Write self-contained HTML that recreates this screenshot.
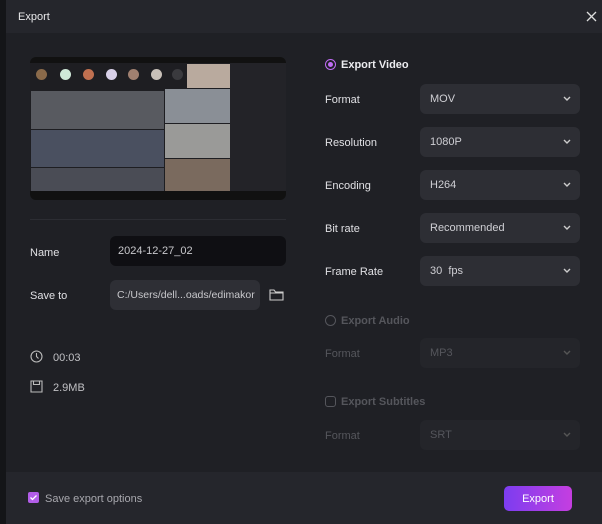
<!DOCTYPE html>
<html><head><meta charset="utf-8"><style>
*{margin:0;padding:0;box-sizing:border-box}
body{width:602px;height:524px;background:#1c1d22;font-family:"Liberation Sans",sans-serif;position:relative;overflow:hidden;color:#e4e4e8;font-size:11px}
.a{position:absolute}
.lbl{position:absolute;font-size:11px;color:#e0e0e4}
.dd{position:absolute;left:420px;width:160px;height:30px;border-radius:6px;background:#2d2e34;color:#cfcfd4;padding-left:10px;line-height:31px;font-size:11px}
.dd svg{position:absolute;right:9px;top:12px}
.dis{background:#24252a;color:#55565c}
.lbl.d{color:#55565c}
.av{position:absolute;top:12px;width:11px;height:11px;border-radius:50%}
</style></head><body>
<div class="a" style="left:0;top:0;width:6px;height:524px;background:#141518"></div>
<div class="a" style="left:6px;top:0;width:596px;height:33px;background:#25262c"></div>
<div class="a" style="left:6px;top:33px;width:596px;height:439px;background:#1f2025"></div>
<div class="a" style="left:6px;top:472px;width:596px;height:52px;background:#25262c"></div>
<div class="a" style="left:18px;top:11px;font-size:11px;color:#e8e8ea">Export</div>
<svg class="a" style="left:586px;top:11px" width="11" height="11"><path d="M1 1L10 10M10 1L1 10" stroke="#ddd" stroke-width="1.3"/></svg>

<div class="a" style="left:30px;top:57px;width:256px;height:143px;background:#111;border-radius:6px;overflow:hidden">
 <div class="a" style="left:0;top:6px;width:256px;height:128px;background:#1e1e22"></div>
 <div class="av" style="left:6px;background:#8a6a4a"></div>
 <div class="av" style="left:30px;background:#cfe8d8"></div>
 <div class="av" style="left:53px;background:#c07050"></div>
 <div class="av" style="left:76px;background:#d8d0e8"></div>
 <div class="av" style="left:98px;background:#a08070"></div>
 <div class="av" style="left:121px;background:#c8c0b8"></div>
 <div class="av" style="left:142px;background:#3a3a3e"></div>
 <div class="a" style="left:1px;top:34px;width:133px;height:38px;background:#585a60"></div>
 <div class="a" style="left:1px;top:73px;width:133px;height:37px;background:#4a5060"></div>
 <div class="a" style="left:1px;top:111px;width:133px;height:23px;background:#4a4c55"></div>
 <div class="a" style="left:135px;top:32px;width:65px;height:34px;background:#8a8f96"></div>
 <div class="a" style="left:135px;top:67px;width:65px;height:34px;background:#9a9a98"></div>
 <div class="a" style="left:135px;top:102px;width:65px;height:32px;background:#7a6a5e"></div>
 <div class="a" style="left:157px;top:7px;width:43px;height:24px;background:#b9aa9e"></div>
 <div class="a" style="left:200px;top:6px;width:56px;height:128px;background:#232328"></div>
</div>
<div class="a" style="left:30px;top:219px;width:256px;height:1px;background:#2c2d33"></div>

<div class="lbl" style="left:30px;top:247px">Name</div>
<div class="a" style="left:110px;top:236px;width:176px;height:30px;border-radius:6px;background:#0f0f13;color:#c8c8cc;padding-left:8px;line-height:31px">2024-12-27_02</div>
<div class="lbl" style="left:30px;top:290px">Save to</div>
<div class="a" style="left:110px;top:280px;width:150px;height:30px;border-radius:6px;background:#2e2f35;color:#c8c8cc;padding-left:7px;line-height:31px;font-size:10.5px">C:/Users/dell...oads/edimakor</div>
<svg class="a" style="left:269px;top:288px" width="15" height="13"><path d="M1 2h4l1.5 2H14v8H1z M1 5h13" fill="none" stroke="#ccc" stroke-width="1.1"/></svg>
<svg class="a" style="left:30px;top:350px" width="13" height="13"><circle cx="6.5" cy="6.5" r="5.5" fill="none" stroke="#bbb" stroke-width="1.1"/><path d="M6.5 3v3.5l2 2" fill="none" stroke="#bbb" stroke-width="1.1"/></svg>
<div class="a" style="left:53px;top:352px;color:#c0c0c4">00:03</div>
<svg class="a" style="left:30px;top:380px" width="13" height="13"><path d="M1 1h11v11H1z M3.5 1v3.5h6V1" fill="none" stroke="#bbb" stroke-width="1.1"/></svg>
<div class="a" style="left:53px;top:382px;color:#c0c0c4">2.9MB</div>

<div class="a" style="left:325px;top:59px;width:11px;height:11px;border-radius:50%;border:1.5px solid #c06cf5;background:#1f2025"><div style="margin:1.5px;width:5px;height:5px;border-radius:50%;background:#c06cf5"></div></div>
<div class="a" style="left:341px;top:59px;font-weight:bold;color:#ececf0">Export Video</div>
<div class="lbl" style="left:325px;top:94px">Format</div><div class="dd" style="top:84px">MOV<svg width="8" height="6"><path d="M1 1l3 3 3-3" fill="none" stroke="#ccc" stroke-width="1.4"/></svg></div>
<div class="lbl" style="left:325px;top:137px">Resolution</div><div class="dd" style="top:127px">1080P<svg width="8" height="6"><path d="M1 1l3 3 3-3" fill="none" stroke="#ccc" stroke-width="1.4"/></svg></div>
<div class="lbl" style="left:325px;top:180px">Encoding</div><div class="dd" style="top:170px">H264<svg width="8" height="6"><path d="M1 1l3 3 3-3" fill="none" stroke="#ccc" stroke-width="1.4"/></svg></div>
<div class="lbl" style="left:325px;top:223px">Bit rate</div><div class="dd" style="top:213px">Recommended<svg width="8" height="6"><path d="M1 1l3 3 3-3" fill="none" stroke="#ccc" stroke-width="1.4"/></svg></div>
<div class="lbl" style="left:325px;top:266px">Frame Rate</div><div class="dd" style="top:256px">30&nbsp; fps<svg width="8" height="6"><path d="M1 1l3 3 3-3" fill="none" stroke="#ccc" stroke-width="1.4"/></svg></div>

<div class="a" style="left:325px;top:315px;width:11px;height:11px;border-radius:50%;border:1.3px solid #55565c"></div>
<div class="a" style="left:341px;top:315px;font-weight:bold;color:#55565c">Export Audio</div>
<div class="lbl d" style="left:325px;top:348px">Format</div><div class="dd dis" style="top:338px">MP3<svg width="8" height="6"><path d="M1 1l3 3 3-3" fill="none" stroke="#555" stroke-width="1.4"/></svg></div>
<div class="a" style="left:325px;top:396px;width:11px;height:11px;border-radius:3px;border:1.3px solid #55565c"></div>
<div class="a" style="left:341px;top:396px;font-weight:bold;color:#55565c">Export Subtitles</div>
<div class="lbl d" style="left:325px;top:430px">Format</div><div class="dd dis" style="top:420px">SRT<svg width="8" height="6"><path d="M1 1l3 3 3-3" fill="none" stroke="#555" stroke-width="1.4"/></svg></div>

<div class="a" style="left:28px;top:492px;width:11px;height:11px;border-radius:2px;background:#b25de8"><svg width="11" height="11"><path d="M2.5 5.5l2 2 4-4" fill="none" stroke="#fff" stroke-width="1.3"/></svg></div>
<div class="a" style="left:45px;top:493px;color:#a8a8ae">Save export options</div>
<div class="a" style="left:504px;top:486px;width:68px;height:25px;border-radius:5px;background:linear-gradient(90deg,#7c3df0,#c53ee0);color:#fff;text-align:center;line-height:26px">Export</div>
</body></html>
